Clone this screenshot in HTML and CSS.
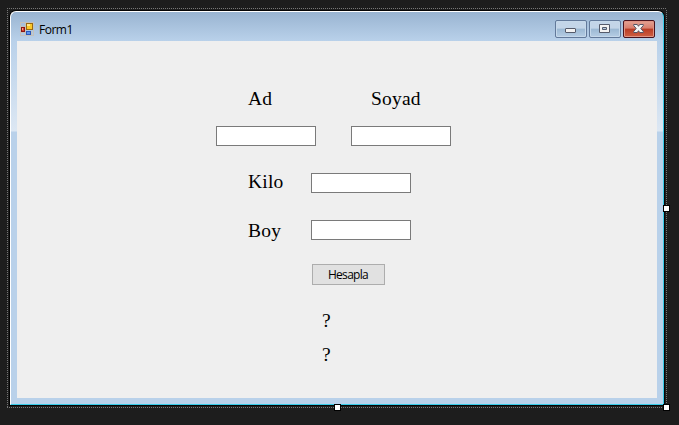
FILE: index.html
```html
<!DOCTYPE html>
<html lang="tr">
<head>
<meta charset="utf-8">
<title>Form1</title>
<link rel="stylesheet" href="styles.css">
</head>
<body>
<div class="designer">
  <div class="window">
    <header class="titlebar">
      <svg class="app-icon" width="14" height="14" viewBox="0 0 14 14" shape-rendering="crispEdges">
        <path d="M.5.5h13v13H.5zM5.500 0v14M0 4.500h5M0 10.500h5M11.500 9v5" fill="none" stroke="#c4c1bb"/>
        <rect x="6" y="1" width="7" height="7" fill="#9b690e"/>
        <rect x="7" y="2" width="5" height="5" fill="#fbc928"/>
        <rect x="7" y="2" width="3" height="2" fill="#ffe789"/>
        <rect x="1" y="5" width="4" height="5" fill="#8c1513"/>
        <rect x="2" y="6" width="2" height="3" fill="#d9452c"/>
        <rect x="2" y="6" width="1" height="2" fill="#f2a08c"/>
        <rect x="6" y="9" width="5" height="4" fill="#2857bb"/>
        <rect x="7" y="10" width="3" height="2" fill="#5b94f0"/>
      </svg>
      <span class="title">Form1</span>
      <div class="controls">
        <span class="control"><svg width="12" height="10" viewBox="0 0 12 10"><rect x=".5" y="4.500" width="10" height="4" rx=".5" fill="#f2f2f2" stroke="#555b6b"/></svg></span>
        <span class="control"><svg width="12" height="10" viewBox="0 0 12 10"><path d="M.5.5h10v8H.5zM3.500 3.500h4v2h-4z" fill="#f2f2f2" fill-rule="evenodd" stroke="#555b6b"/></svg></span>
        <span class="control close"><svg width="12" height="10" viewBox="0 0 12 10"><path d="M.7.500h3.600L5.500 2.300 6.700.500h3.600v1L7.800 4.500l2.500 3v1H6.700L5.500 6.700 4.300 8.500H.7v-1l2.500-3-2.500-3z" fill="#f5f5f5" stroke="#555565"/></svg></span>
      </div>
    </header>
    <main class="client">
      <div class="row names"><span class="first">Ad</span><span>Soyad</span></div>
      <div class="row name-fields"><input type="text" class="field"><input type="text" class="field"></div>
      <div class="row weight"><span class="label">Kilo</span><input type="text" class="field"></div>
      <div class="row height"><span class="label">Boy</span><input type="text" class="field"></div>
      <button type="button" class="calculate">Hesapla</button>
      <div class="result">?</div>
      <div class="result second">?</div>
    </main>
  </div>
  <i class="handle right"></i>
  <i class="handle bottom"></i>
  <i class="handle corner"></i>
</div>
</body>
</html>
```
FILE: styles.css
```css
* { box-sizing: border-box; }
html, body { margin: 0; height: 100%; }
body {
  padding: 8px 12px 17px 7px;
  overflow: hidden;
  background: #1d1d1d;
  font-family: "Liberation Serif", serif;
  color: #000;
}
/* dotted selection outline, one dot every other pixel */
.designer {
  position: relative;
  width: 660px;
  height: 400px;
  padding: 3px;
  background:
    repeating-linear-gradient(90deg, #777 0 1px, #1d1d1d 1px 2px) 0 0 / 100% 1px no-repeat,
    repeating-linear-gradient(90deg, #777 0 1px, #1d1d1d 1px 2px) 0 100% / 100% 1px no-repeat,
    repeating-linear-gradient(#777 0 1px, #1d1d1d 1px 2px) 0 0 / 1px 100% no-repeat,
    repeating-linear-gradient(#777 0 1px, #1d1d1d 1px 2px) 100% 0 / 1px 100% no-repeat;
}
.window {
  width: 654px;
  height: 394px;
  padding: 0 6px 6px;
  border: 1px solid #fff;
  border-right-color: #36cbe8;
  border-bottom-color: #36cbe8;
  border-radius: 6px 6px 0 0;
  background: linear-gradient(#99b4d1 0, #b9d1ea 29px, #dce7f3 119px, #b9d1ea 120px);
  box-shadow: 0 0 0 1px #050505;
}
.titlebar {
  display: flex;
  height: 29px;
  padding: 0 2px 0 3px;
}
.app-icon { margin-top: 10px; flex: none; }
.title {
  margin: 9px 0 0 5px;
  font: 12px/18px "Open Sans", sans-serif;
  letter-spacing: -.5px;
}
.controls { display: flex; gap: 2px; margin: 8px 0 0 auto; }
.control {
  display: flex;
  align-items: center;
  justify-content: center;
  width: 32px;
  height: 18px;
  border: 1px solid #62799a;
  border-radius: 2px;
  background: linear-gradient(#c3d5e8 0 45%, #9bb8d3 50%, #b6cde4);
  box-shadow: inset 0 0 0 1px #c5d8ea;
}
.control.close {
  border-color: #48121d;
  background: linear-gradient(#e3a395, #d87d6c 45%, #b93b24 50%, #cf6044);
  box-shadow: inset 0 0 0 1px #df9384;
}
.client {
  display: flow-root;
  width: 640px;
  height: 357px;
  background: #efefef;
  font-size: 19.5px;
  line-height: 24px;
  letter-spacing: .2px;
}
.row { display: flex; }
.names { margin: 46px 0 0 231px; }
.first { width: 123px; }
.name-fields { gap: 35px; margin: 15px 0 0 199px; }
.field {
  width: 100px;
  height: 20px;
  margin: 0;
  padding: 1px 3px;
  border: 1px solid #7a7a7a;
  border-radius: 0;
  background: #fff;
  outline: none;
}
.weight { margin: 24px 0 0 231px; }
.height { margin: 25px 0 0 231px; }
.label { width: 63px; }
.weight .field { margin-top: 3px; }
.height .field { margin-top: 1px; }
.calculate {
  display: block;
  width: 73px;
  height: 21px;
  margin: 21px 0 0 295px;
  padding: 0 1px 0 0;
  border: 1px solid #adadad;
  background: #e1e1e1;
  color: #000;
  font: 12px/19px "Open Sans", sans-serif;
  letter-spacing: -.7px;
}
.result { margin: 24px 0 0 305px; }
.result.second { margin-top: 10px; }
.handle {
  position: absolute;
  width: 7px;
  height: 7px;
  border: 1px solid #000;
  background: #fff;
}
.right { left: 656px; top: 197px; }
.bottom { left: 327px; top: 396px; }
.corner { left: 656px; top: 396px; }
```
